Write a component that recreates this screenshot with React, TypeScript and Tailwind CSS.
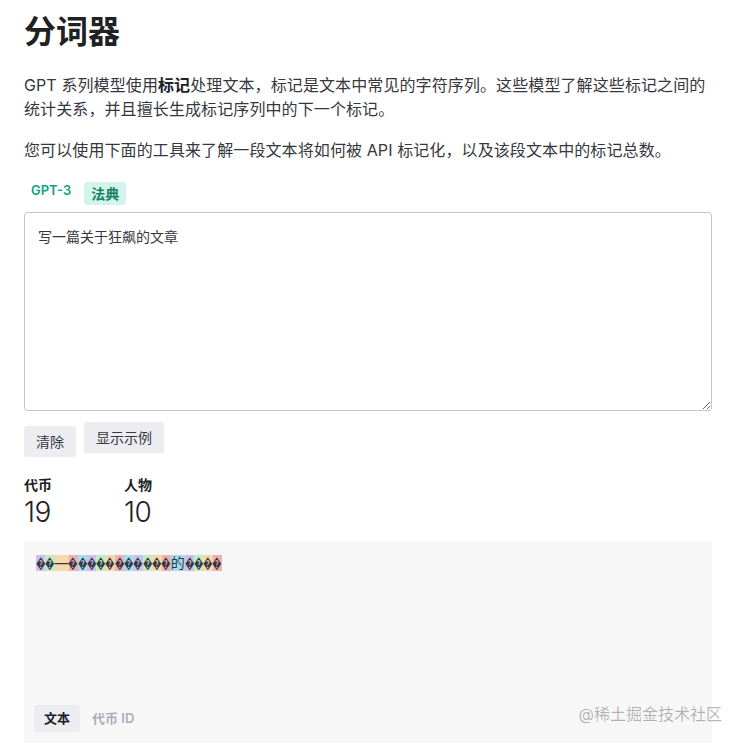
import React from 'react';

const tokenColors = [
  'bg-[rgba(107,64,216,0.3)]',
  'bg-[rgba(104,222,122,0.4)]',
  'bg-[rgba(244,172,54,0.4)]',
  'bg-[rgba(239,65,70,0.4)]',
  'bg-[rgba(39,181,234,0.4)]',
];

const bad = '\uFFFD';
const tokens = [
  bad, bad, '—',
  bad, bad, bad, bad, bad, bad, bad, bad, bad, bad, bad,
  '的',
  bad, bad, bad, bad,
];

export default function App() {
  return (
    <div
      className="relative min-h-screen bg-white pl-6 pr-[31px] pt-3 text-[#353740]"
      style={{ fontFamily: 'Inter, "Noto Sans CJK SC", sans-serif' }}
    >
      <h1 className="text-[32px] leading-[40px] font-semibold text-[#202123]">分词器</h1>

      <p className="mt-[21px] text-[16px] leading-6 tracking-[0.1px]">
        <span className="whitespace-nowrap">
          GPT 系列模型使用<b className="font-semibold text-[#202123]">标记</b>处理文本，标记是文本中常见的字符序列。这些模型了解这些标记之间的
        </span>
        <br />
        统计关系，并且擅长生成标记序列中的下一个标记。
      </p>

      <p className="mt-[17px] text-[16px] leading-6 tracking-[0.1px]">
        您可以使用下面的工具来了解一段文本将如何被 API 标记化，以及该段文本中的标记总数。
      </p>

      {/* model tabs */}
      <div className="mt-[17px] flex items-start gap-[6px]">
        <div className="h-[23px] px-[7px] text-[13px] leading-[23px] font-semibold text-[#10a37f]">GPT-3</div>
        <div className="mt-[3px] h-[23px] rounded-[3px] bg-[#d2f4ea] px-[7px] text-[14px] leading-[23px] font-semibold text-[#1a7f64]">
          法典
        </div>
      </div>

      <textarea
        className="mt-[7px] block h-[199px] w-full rounded-[3px] border border-[#c5c5d2] px-[13px] py-[12px] text-[14px] leading-[24px] text-[#353740] outline-none"
        style={{ fontFamily: 'Inter, "Noto Sans CJK SC", sans-serif' }}
        defaultValue="写一篇关于狂飙的文章"
      />

      <div className="mt-[11px] flex items-start gap-2">
        <button className="mt-[4px] h-[31px] rounded-[3px] bg-[#ececf1] px-3 text-[14px] text-[#353740]">清除</button>
        <button className="h-[31px] rounded-[3px] bg-[#ececf1] px-3 text-[14px] text-[#353740]">显示示例</button>
      </div>

      {/* counts */}
      <div className="mt-[18px] flex">
        <div className="w-[100px]">
          <div className="text-[14px] leading-5 font-semibold text-[#202123]">代币</div>
          <div className="mt-[1px] text-[28px] leading-8 font-light tracking-[-0.5px] text-[#202123]">19</div>
        </div>
        <div className="w-[100px]">
          <div className="text-[14px] leading-5 font-semibold text-[#202123]">人物</div>
          <div className="mt-[1px] text-[28px] leading-8 font-light tracking-[-0.5px] text-[#202123]">10</div>
        </div>
      </div>

      {/* tokenized output */}
      <div className="mt-[13px] flex h-[202px] flex-col justify-between bg-[#f7f7f8] px-3 pt-[14px] pb-[11px]">
        <div className="flex items-center text-[14px] leading-5 text-[#353740]">
          {tokens.map((t, i) =>
            t === bad ? (
              <span
                key={i}
                className={`inline-flex h-[16px] w-[9.3px] items-center justify-center overflow-visible ${tokenColors[i % 5]}`}
              >
                <span className="inline-block scale-x-[0.68] text-[14px] leading-[16px]">{t}</span>
              </span>
            ) : (
              <span key={i} className={`inline-block h-[16px] leading-[16px] ${tokenColors[i % 5]}`}>
                {t}
              </span>
            )
          )}
        </div>
        <div className="-ml-[2px] flex items-center gap-3">
          <div className="h-[27px] rounded-[3px] bg-[#ececf1] px-[10px] text-[13px] leading-[27px] font-semibold text-[#202123]">
            文本
          </div>
          <div className="text-[13px] font-semibold text-[#acacbe]">代币 ID</div>
        </div>
      </div>

      {/* watermark */}
      <div className="absolute right-[21px] top-[702px] text-[16px] leading-6 text-[rgba(0,0,0,0.28)]">@稀土掘金技术社区</div>
    </div>
  );
}
